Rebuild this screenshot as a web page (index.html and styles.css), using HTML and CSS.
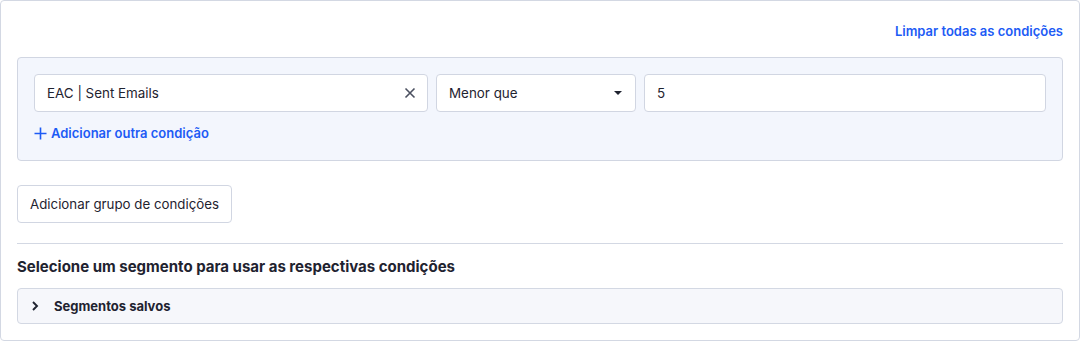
FILE: index.html
```html
<!DOCTYPE html>
<html lang="pt">
<head>
<meta charset="utf-8">
<link rel="stylesheet" href="styles.css">
</head>
<body>
<div class="card">
  <div class="header">
    <a class="link clear">Limpar todas as condições</a>
  </div>
  <div class="group">
    <div class="row">
      <div class="field">
        <span>EAC | Sent Emails</span>
        <svg class="x" width="12" height="12" viewBox="0 0 12 12"><path d="M1.5 1.5L10.5 10.5M10.5 1.5L1.5 10.5" stroke="#4b5060" stroke-width="1.6" fill="none"/></svg>
      </div>
      <div class="field">
        <span>Menor que</span>
        <svg class="caret" width="10" height="6" viewBox="0 0 10 6"><path d="M1 1H9L5 5Z" fill="#1f2330"/></svg>
      </div>
      <div class="field"><span>5</span></div>
    </div>
    <a class="link add">
      <svg width="13" height="13" viewBox="0 0 13 13"><path d="M6.5 0.5V12.5M0.5 6.5H12.5" stroke="#1d5bf5" stroke-width="1.6" fill="none"/></svg>
      <span>Adicionar outra condição</span>
    </a>
  </div>
  <button class="btn">Adicionar grupo de condições</button>
  <hr class="rule">
  <h2 class="title">Selecione um segmento para usar as respectivas condições</h2>
  <div class="accordion">
    <svg class="chev" width="10" height="12" viewBox="0 0 10 12"><path d="M3 2L7 6L3 10" stroke="#1f2330" stroke-width="1.9" fill="none"/></svg>
    <span>Segmentos salvos</span>
  </div>
</div>
</body>
</html>
```
FILE: styles.css
```css
* { box-sizing: border-box; }
html, body { margin: 0; padding: 0; background: #fff; }
body { font-family: "Inter", "Liberation Sans", sans-serif; color: #1f2330; }
.card {
  width: 1080px; height: 341px;
  border: 1px solid #d3d8e3; border-radius: 4px;
  padding: 20px 16px 16px;
}
.header { display: flex; justify-content: flex-end; height: 20px; margin-bottom: 16px; }
.link { color: #1d5bf5; font-weight: 600; font-size: 13px; line-height: 20px; cursor: pointer; }
.group {
  background: #f3f6fd; border: 1px solid #d1d6e2; border-radius: 4px;
  padding: 16px 16px 18px;
}
.row { display: grid; grid-template-columns: 394px 200px 1fr; gap: 8px; }
.field {
  height: 38px; background: #fff; border: 1px solid #d1d6e2; border-radius: 4px;
  display: flex; align-items: center; justify-content: space-between;
  padding: 0 12px; font-size: 13.4px;
}
.field .x { margin-right: -1px; }
.add { display: flex; align-items: center; gap: 4px; margin-top: 12px; height: 18px; }
.btn {
  display: block; margin-top: 24px; height: 38px; padding: 0 12px;
  background: #fff; border: 1px solid #d1d6e2; border-radius: 4px;
  font-family: inherit; font-size: 13.3px; color: #1f2330;
}
.rule { border: 0; border-top: 1px solid #d3d8e3; margin: 20px 0 0; height: 0; }
.title { font-size: 15px; font-weight: 700; line-height: 22px; margin: 12px 0 10px; }
.accordion {
  height: 36px; background: #f6f7fb; border: 1px solid #d3d8e3; border-radius: 4px;
  display: flex; align-items: center; padding: 0 12px; gap: 14px;
  font-size: 13px; font-weight: 700;
}
```
